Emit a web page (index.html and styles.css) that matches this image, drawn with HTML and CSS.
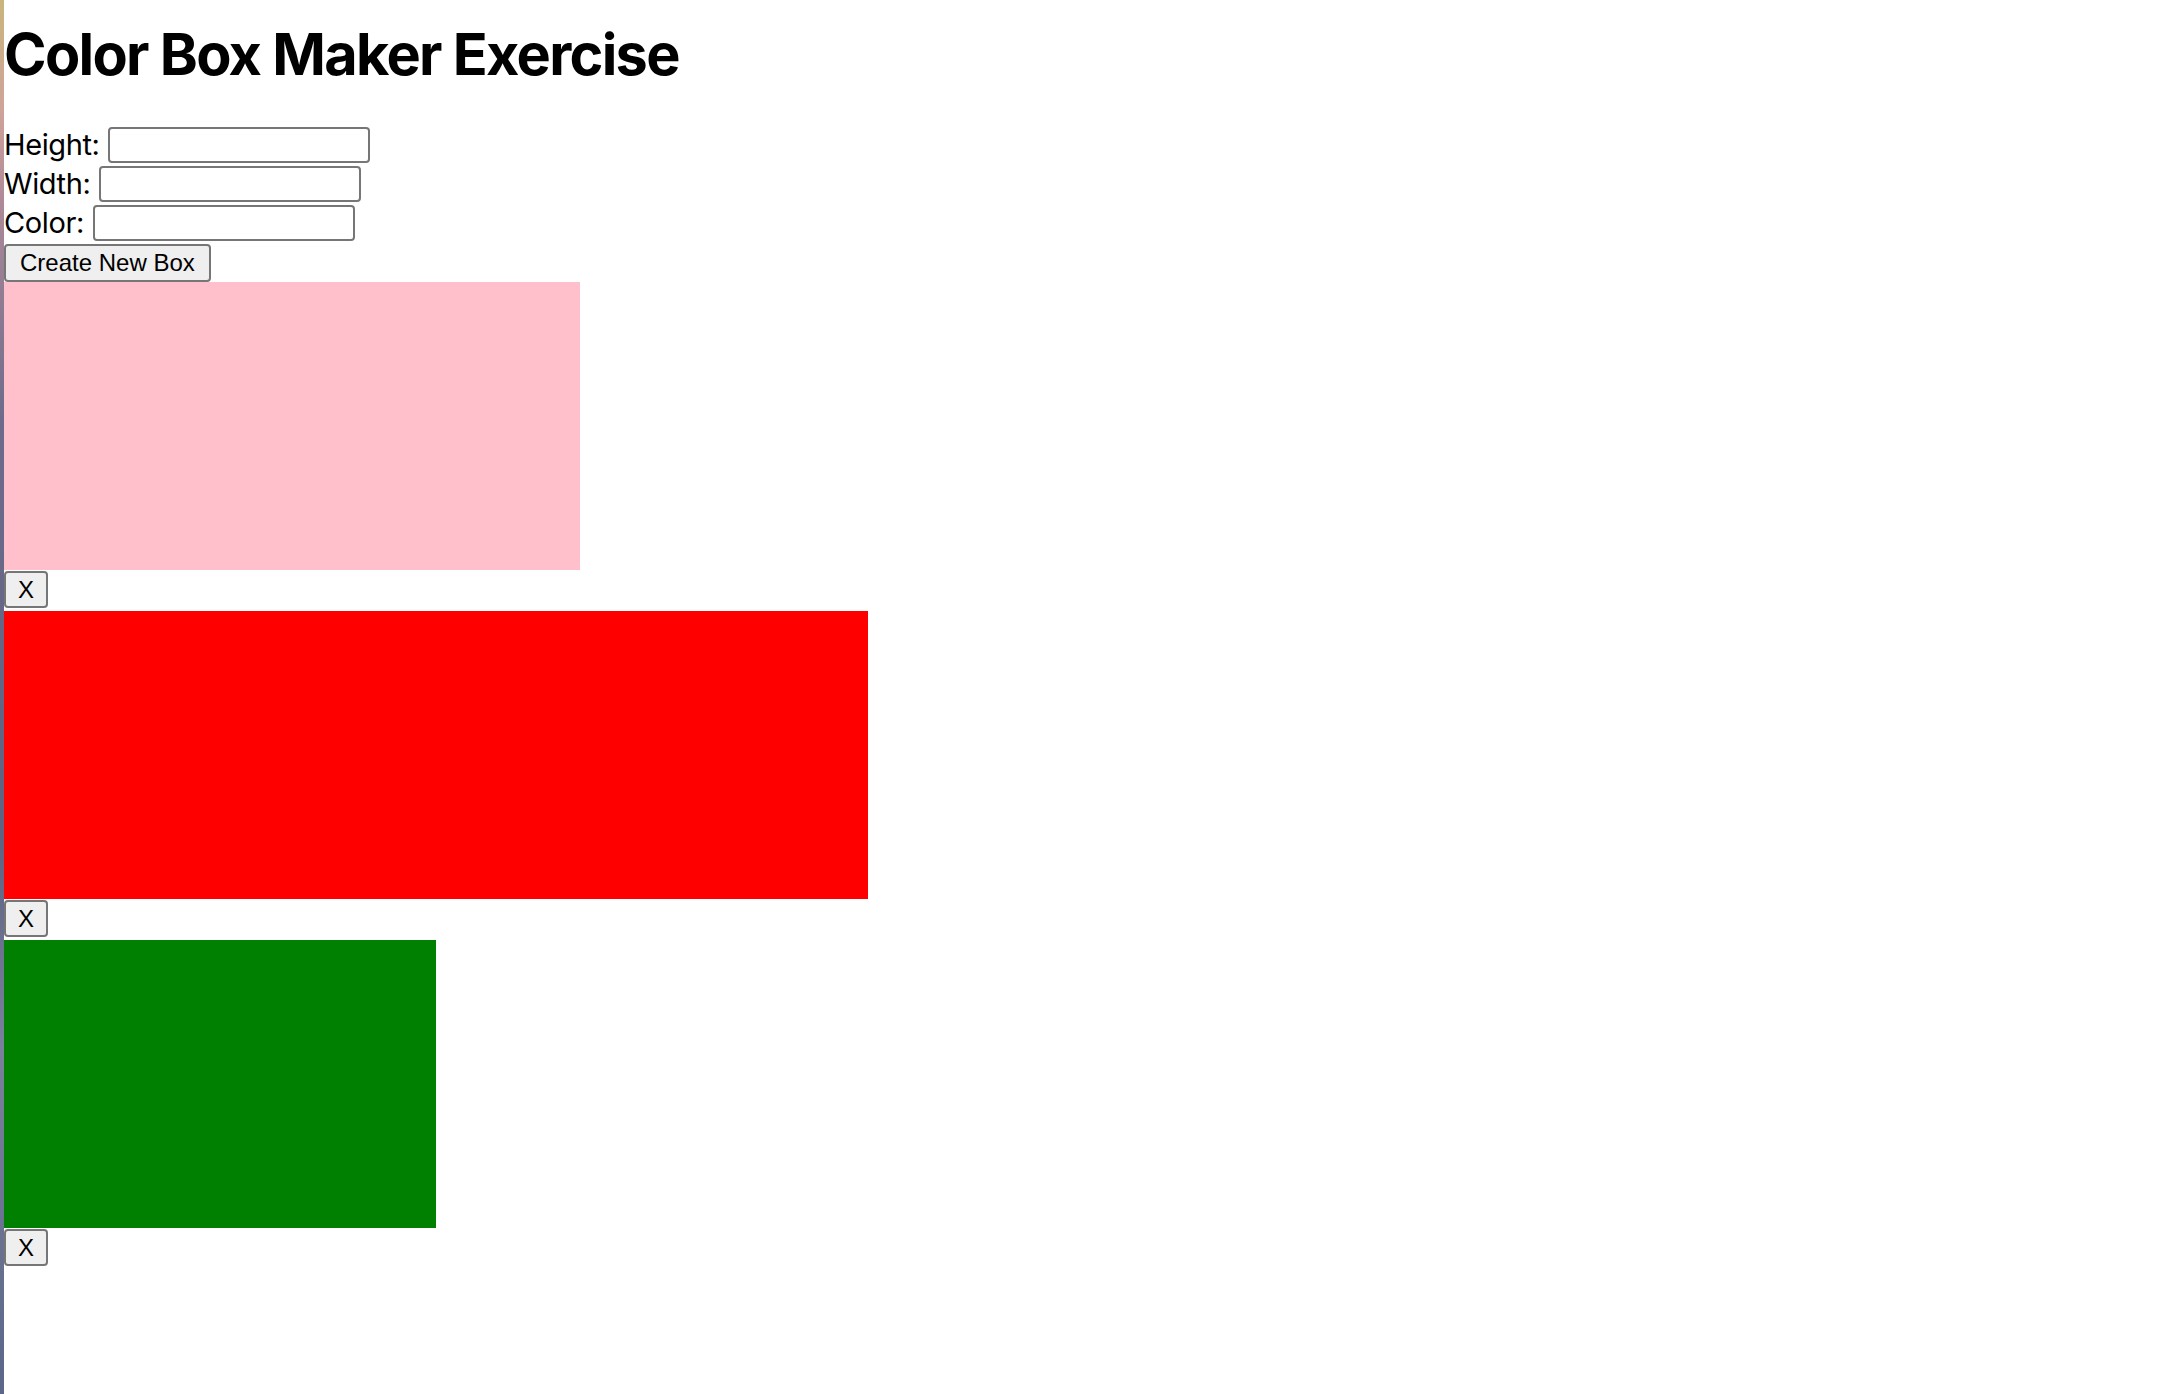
FILE: index.html
```html
<!DOCTYPE html>
<html lang="en">

<head>
    <meta charset="UTF-8" />
    <meta name="viewport" content="width=device-width, initial-scale=1.0" />
    <title>Color Box Maker</title>
    <link rel="stylesheet" href="styles.css">
</head>

<body>
    <div class="page">
        <h1>Color Box Maker Exercise</h1>

        <form class="box-form">
            <div class="field">
                <label for="height">Height:</label>
                <input type="text" id="height" name="height" />
            </div>
            <div class="field">
                <label for="width">Width:</label>
                <input type="text" id="width" name="width" />
            </div>
            <div class="field">
                <label for="color">Color:</label>
                <input type="text" id="color" name="color" />
            </div>
            <button type="submit" class="btn">Create New Box</button>
        </form>

        <div class="box-list">
            <div class="box">
                <div class="swatch swatch-pink"></div>
                <div class="remove-row"><button class="btn btn-remove">X</button></div>
            </div>
            <div class="box">
                <div class="swatch swatch-red"></div>
                <div class="remove-row"><button class="btn btn-remove">X</button></div>
            </div>
            <div class="box">
                <div class="swatch swatch-green"></div>
                <div class="remove-row"><button class="btn btn-remove">X</button></div>
            </div>
        </div>
    </div>
</body>

</html>
```

FILE: styles.css
```css
html {
    background: linear-gradient(to bottom, #c9b57c 0%, #cfa39a 8%, #b08a98 14%, #6d6b8c 30%, #5e6283 60%, #7a7f9c 75%, #5d6688 100%);
    min-height: 100%;
}

body {
    margin: 0 0 0 4px;
    min-height: 1394px;
    background: #fff;
    font-family: Inter, "Noto Sans", sans-serif;
    color: #000;
}

h1 {
    font-size: 57.6px;
    font-weight: 700;
    line-height: 70px;
    margin: 19px 0 36px;
    letter-spacing: -1.7px;
}

.box-form {
    margin: 0;
}

.field {
    display: flex;
    align-items: center;
    gap: 9px;
    height: 39px;
    font-size: 29px;
    letter-spacing: -0.4px;
}

.field input {
    width: 262px;
    height: 36px;
    box-sizing: border-box;
    margin: 0;
    border: 2px solid #767676;
    border-radius: 4px;
    background: #fff;
}

.btn {
    font-family: "Liberation Sans", Arial, sans-serif;
    font-size: 24px;
    color: #000;
    background-color: #efefef;
    border: 2px solid #767676;
    border-radius: 4px;
    margin: 0;
    height: 38px;
    padding: 0 14px;
    display: block;
}

.box-form .btn {
    margin-top: 2px;
}

.swatch {
    height: 288px;
}

.swatch-pink {
    width: 576px;
    background-color: pink;
}

.swatch-red {
    width: 864px;
    background-color: red;
}

.swatch-green {
    width: 432px;
    background-color: green;
}

.remove-row {
    height: 40px;
}

.btn-remove {
    margin-top: 1px;
    height: 37px;
    padding: 0 12px;
}
```
